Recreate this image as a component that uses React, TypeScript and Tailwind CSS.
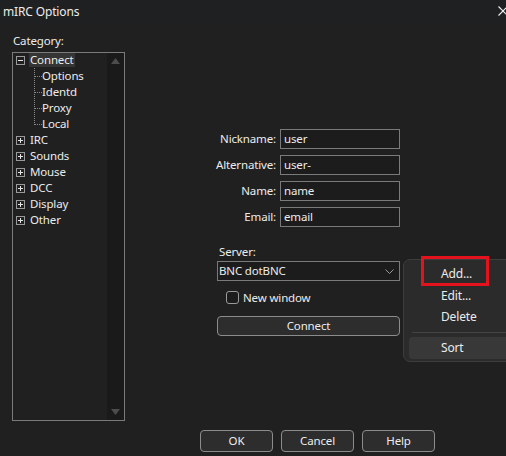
import React from "react";

const font = { fontFamily: '"Segoe UI", "Noto Sans", sans-serif' };

function Expander({ open }: { open?: boolean }) {
  return (
    <span className="w-[9px] h-[9px] border border-[#9a9a9a] flex items-center justify-center shrink-0">
      <svg width="7" height="7" viewBox="0 0 7 7">
        <line x1="1" y1="3.5" x2="6" y2="3.5" stroke="#e6e6e6" strokeWidth="1" />
        {!open && <line x1="3.5" y1="1" x2="3.5" y2="6" stroke="#e6e6e6" strokeWidth="1" />}
      </svg>
    </span>
  );
}

function TopNode({ label, open, selected }: { label: string; open?: boolean; selected?: boolean }) {
  return (
    <div className="h-[16px] flex items-center pl-[3px]">
      <Expander open={open} />
      <span className={"ml-[4px] px-[1px] h-[14px] leading-[14px] " + (selected ? "bg-[#353535]" : "")}>{label}</span>
    </div>
  );
}

function ChildNode({ label }: { label: string }) {
  return (
    <div className="h-[16px] flex items-center">
      <span className="w-[7px] border-t border-dotted border-[#8a8a8a] ml-[1px]" />
      <span className="leading-[14px]">{label}</span>
    </div>
  );
}

function FieldRow({ label, value }: { label: string; value: string }) {
  return (
    <>
      <div className="h-[20px] flex items-center justify-end">{label}</div>
      <div className="h-[20px] border border-[#7a7a7a] bg-[#1c1c1c] flex items-center pl-[3px]">{value}</div>
    </>
  );
}

export default function App() {
  return (
    <div
      className="w-[506px] h-[456px] bg-[#202020] text-[#ececec] text-[11.5px] tracking-[-0.15px] flex flex-col overflow-hidden relative"
      style={font}
    >
      {/* Title bar */}
      <div className="h-[24px] bg-[#1f2022] flex items-center pl-[3px] relative shrink-0">
        <span className="text-[12px]">mIRC Options</span>
        <svg className="absolute left-[498px] top-[6px]" width="10" height="10" viewBox="0 0 10 10">
          <line x1="0.5" y1="0.5" x2="9.5" y2="9.5" stroke="#f0f0f0" strokeWidth="1.1" />
          <line x1="9.5" y1="0.5" x2="0.5" y2="9.5" stroke="#f0f0f0" strokeWidth="1.1" />
        </svg>
      </div>

      {/* Main */}
      <div className="flex h-[406px] shrink-0">
        {/* Left column */}
        <div className="pl-[12px] w-[125px] shrink-0">
          <div className="h-[28px] pt-[10px] pl-[1px] leading-[14px]">Category:</div>
          <div className="w-[113px] h-[369px] border border-[#7a7a7a] flex">
            <div className="flex-1 mt-[-1px]">
              <TopNode label="Connect" open selected />
              <div className="relative ml-[21px]">
                <div className="absolute left-0 top-0 h-[57px] border-l border-dotted border-[#8a8a8a]" />
                <ChildNode label="Options" />
                <ChildNode label="Identd" />
                <ChildNode label="Proxy" />
                <ChildNode label="Local" />
              </div>
              <TopNode label="IRC" />
              <TopNode label="Sounds" />
              <TopNode label="Mouse" />
              <TopNode label="DCC" />
              <TopNode label="Display" />
              <TopNode label="Other" />
            </div>
            <div className="w-[17px] bg-[#1a1a1a] flex flex-col items-center justify-between pt-[5px] pb-[5px]">
              <svg width="9" height="6" viewBox="0 0 9 6">
                <polygon points="4.5,0 9,6 0,6" fill="#4c4c4c" />
              </svg>
              <svg width="9" height="6" viewBox="0 0 9 6">
                <polygon points="0,0 9,0 4.5,6" fill="#4c4c4c" />
              </svg>
            </div>
          </div>
        </div>

        {/* Right column */}
        <div className="pl-[92px] pt-[105px] flex flex-col">
          <div className="w-[183px] grid grid-cols-[59px_120px] gap-x-[4px] gap-y-[6px]">
            <FieldRow label="Nickname:" value="user" />
            <FieldRow label="Alternative:" value="user-" />
            <FieldRow label="Name:" value="name" />
            <FieldRow label="Email:" value="email" />
          </div>

          <div className="mt-[18px] pl-[2px] leading-[14px]">Server:</div>
          <div className="mt-[2px] w-[183px] h-[20px] border border-[#7a7a7a] bg-[#1c1c1c] flex items-center pl-[1px] pr-[5px] justify-between">
            <span>BNC dotBNC</span>
            <svg width="9" height="5" viewBox="0 0 9 5">
              <polyline points="0.5,0.5 4.5,4.5 8.5,0.5" fill="none" stroke="#9a9a9a" strokeWidth="1" />
            </svg>
          </div>

          <div className="mt-[10px] h-[13px] flex items-center pl-[9px]">
            <span className="w-[13px] h-[13px] rounded-[3px] border border-[#9a9a9a] bg-[#1c1c1c]" />
            <span className="ml-[4px]">New window</span>
          </div>

          <div className="mt-[12px] w-[183px] h-[20px] rounded-[4px] border border-[#8c8c8c] bg-[#2d2d2d] flex items-center justify-center">
            Connect
          </div>
        </div>
      </div>

      {/* Bottom buttons */}
      <div className="h-[22px] flex gap-[8px] pl-[200px] shrink-0">
        <div className="w-[73px] h-[22px] rounded-[4px] border border-[#8c8c8c] bg-[#2d2d2d] flex items-center justify-center">OK</div>
        <div className="w-[73px] h-[22px] rounded-[4px] border border-[#8c8c8c] bg-[#2d2d2d] flex items-center justify-center">Cancel</div>
        <div className="w-[73px] h-[22px] rounded-[4px] border border-[#8c8c8c] bg-[#2d2d2d] flex items-center justify-center">Help</div>
      </div>

      {/* Context menu */}
      <div className="absolute left-[403px] top-[259px] w-[120px] h-[103px] bg-[#2b2b2b] border border-[#3d3d3d] rounded-[7px] pt-[3px] flex flex-col text-[12px]">
        <div className="h-[22px] flex items-center pl-[37px]">Add...</div>
        <div className="h-[21px] flex items-center pl-[37px]">Edit...</div>
        <div className="h-[22px] flex items-center pl-[37px]">Delete</div>
        <div className="mt-[4px] ml-[8px] border-t border-[#444444]" />
        <div className="mt-[4px] mx-[5px] h-[22px] rounded-[4px] bg-[#383838] flex items-center pl-[32px]">Sort</div>
      </div>

      {/* Red highlight box */}
      <div className="absolute left-[421px] top-[256px] w-[68px] h-[30px] border-[3px] border-[#e3121c]" />
    </div>
  );
}
